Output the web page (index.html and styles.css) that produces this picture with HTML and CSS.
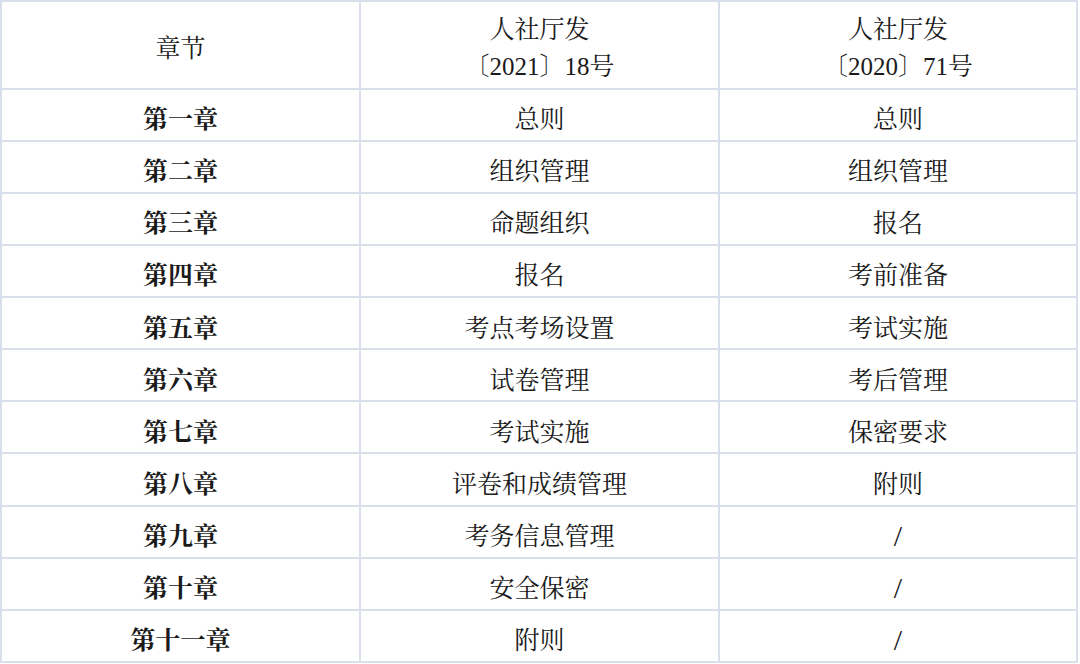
FILE: index.html
```html
<!DOCTYPE html>
<html lang="zh-CN">
<head>
<meta charset="utf-8">
<title>章节对照</title>
<link rel="stylesheet" href="styles.css">
</head>
<body>
<div class="table">
  <div class="cell head">章节</div>
  <div class="cell head"><span>人社厅发</span><span>〔2021〕18号</span></div>
  <div class="cell head"><span>人社厅发</span><span>〔2020〕71号</span></div>

  <div class="cell ch">第一章</div><div class="cell">总则</div><div class="cell">总则</div>
  <div class="cell ch">第二章</div><div class="cell">组织管理</div><div class="cell">组织管理</div>
  <div class="cell ch">第三章</div><div class="cell">命题组织</div><div class="cell">报名</div>
  <div class="cell ch">第四章</div><div class="cell">报名</div><div class="cell">考前准备</div>
  <div class="cell ch">第五章</div><div class="cell">考点考场设置</div><div class="cell">考试实施</div>
  <div class="cell ch">第六章</div><div class="cell">试卷管理</div><div class="cell">考后管理</div>
  <div class="cell ch">第七章</div><div class="cell">考试实施</div><div class="cell">保密要求</div>
  <div class="cell ch">第八章</div><div class="cell">评卷和成绩管理</div><div class="cell">附则</div>
  <div class="cell ch">第九章</div><div class="cell">考务信息管理</div><div class="cell slash">/</div>
  <div class="cell ch">第十章</div><div class="cell">安全保密</div><div class="cell slash">/</div>
  <div class="cell ch">第十一章</div><div class="cell">附则</div><div class="cell slash">/</div>
</div>
</body>
</html>
```
FILE: styles.css
```css
html, body {
  margin: 0;
  padding: 0;
  background: #ffffff;
}

.table {
  width: 1078px;
  box-sizing: border-box;
  display: grid;
  grid-template-columns: 357px 357px 356px;
  grid-template-rows: 85.5px repeat(11, 50.15px);
  gap: 2px;
  padding: 2px;
  background: #d9e0ec;
  font-family: "Liberation Serif", "Noto Serif CJK SC", "Noto Sans CJK SC", serif;
  font-size: 25px;
  color: #1a1a1a;
}

.cell {
  background: #ffffff;
  display: flex;
  flex-direction: column;
  align-items: center;
  justify-content: center;
  line-height: 37px;
  padding-top: 10px;
  box-sizing: border-box;
}

.head {
  padding-top: 7px;
}

.ch {
  font-weight: bold;
}

.slash {
  font-family: "Liberation Serif", serif;
  font-size: 30px;
  padding-top: 8px;
}
```
